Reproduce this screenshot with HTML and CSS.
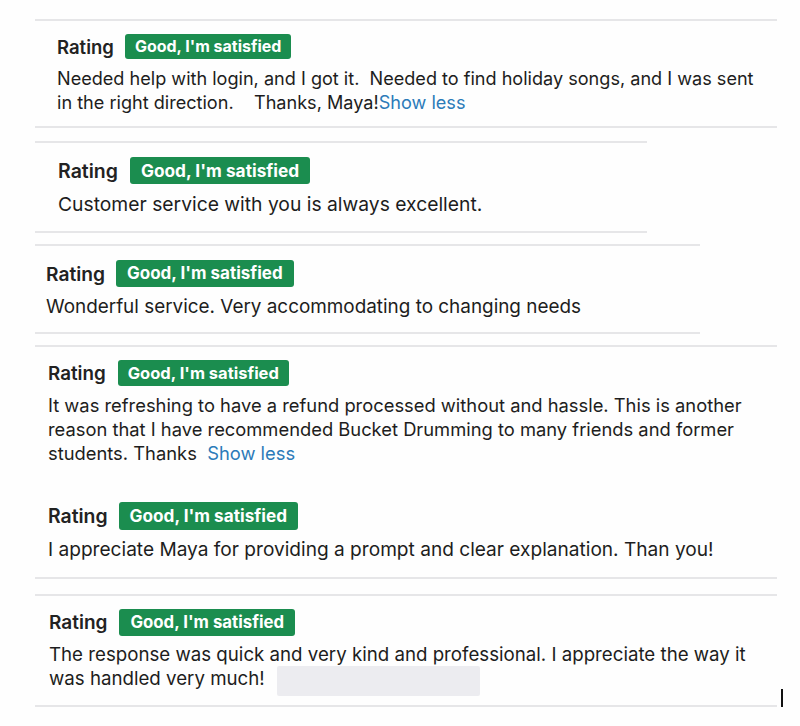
FILE: index.html
```html
<!DOCTYPE html>
<html>
<head>
<meta charset="utf-8">
<link rel="stylesheet" href="styles.css">
</head>
<body>
<main class="page">
  <section class="card card-a">
    <div class="head"><span class="label">Rating</span><span class="badge">Good, I'm satisfied</span></div>
    <p class="text">Needed help with login, and I got it.&nbsp; Needed to find holiday songs, and I was sent in the right direction.&nbsp;&nbsp;&nbsp; Thanks, Maya!<a class="more">Show less</a></p>
  </section>
  <section class="card card-b">
    <div class="head"><span class="label">Rating</span><span class="badge">Good, I'm satisfied</span></div>
    <p class="text">Customer service with you is always excellent.</p>
  </section>
  <section class="card card-c">
    <div class="head"><span class="label">Rating</span><span class="badge">Good, I'm satisfied</span></div>
    <p class="text">Wonderful service. Very accommodating to changing needs</p>
  </section>
  <section class="card card-d">
    <div class="head"><span class="label">Rating</span><span class="badge">Good, I'm satisfied</span></div>
    <p class="text">It was refreshing to have a refund processed without and hassle. This is another reason that I have recommended Bucket Drumming to many friends and former students. Thanks&nbsp; <a class="more">Show less</a></p>
    <div class="sub">
      <div class="head"><span class="label">Rating</span><span class="badge">Good, I'm satisfied</span></div>
      <p class="text">I appreciate Maya for providing a prompt and clear explanation. Than you!</p>
    </div>
  </section>
  <section class="card card-f">
    <div class="head"><span class="label">Rating</span><span class="badge">Good, I'm satisfied</span></div>
    <p class="text">The response was quick and very kind and professional. I appreciate the way it was handled very much!<span class="blank"></span></p>
    <span class="cursor"></span>
  </section>
</main>
</body>
</html>
```

FILE: styles.css
```css
html, body {
  margin: 0;
  padding: 0;
  background: #fefefe;
}
body {
  font-family: Inter, "Liberation Sans", sans-serif;
  color: #1d1d20;
}
.page {
  padding-top: 19px;
  padding-left: 35px;
  display: flex;
  flex-direction: column;
}
.card {
  border-top: 2px solid #e6e6e8;
  border-bottom: 2px solid #e6e6e8;
  box-sizing: border-box;
  position: relative;
}
.head {
  display: flex;
  align-items: center;
  gap: 11px;
  height: 25px;
}
.label {
  font-size: 18.5px;
  font-weight: 600;
  color: #222;
}
.badge {
  background: #1b8d4f;
  color: #fff;
  font-weight: 700;
  font-size: 16px;
  height: 25px;
  line-height: 25px;
  padding: 0 10px;
  border-radius: 3px;
}
.text {
  margin: 7px 0 0;
  font-size: 18.1px;
  line-height: 24px;
}
.more {
  color: #2c7bb9;
}
.card-a {
  width: 742px;
  padding: 13px 20px 12px 22px;
}
.card-b {
  width: 612px;
  margin-top: 13px;
  padding: 14px 20px 15px 23px;
}
.card-b .head { height: 27px; gap: 12px; }
.card-b .badge { height: 27px; line-height: 27px; font-size: 17.3px; padding: 0 11px; }
.card-b .label { font-size: 19.5px; }
.card-b .text { font-size: 19.3px; margin-top: 8px; }
.card-c {
  width: 665px;
  margin-top: 11px;
  padding: 14px 20px 13px 11px;
}
.card-c .head { height: 27px; gap: 11px; }
.card-c .badge { height: 27px; line-height: 27px; font-size: 17px; padding: 0 11px; }
.card-c .label { font-size: 19.2px; }
.card-c .text { font-size: 18.9px; margin-top: 8px; }
.card-d {
  width: 742px;
  margin-top: 11px;
  padding: 13px 20px 16px 13px;
}
.card-d > .head { height: 26px; gap: 12px; }
.card-d > .head .badge { height: 26px; line-height: 26px; font-size: 16.5px; }
.card-d > .head .label { font-size: 18.8px; }
.card-d > .text { font-size: 18.35px; }
.sub {
  margin-top: 37px;
}
.sub .head { height: 28px; gap: 11px; }
.sub .badge { height: 28px; line-height: 28px; font-size: 17.2px; padding: 0 11px; }
.sub .label { font-size: 19.4px; }
.sub .text { font-size: 19.1px; }
.card-f {
  width: 742px;
  margin-top: 15px;
  padding: 13px 20px 14px 14px;
}
.card-f .head { height: 27px; gap: 12px; }
.card-f .badge { height: 27px; line-height: 27px; font-size: 16.8px; padding: 0 11px; }
.card-f .label { font-size: 19px; }
.card-f .text { font-size: 18.7px; }
.blank {
  display: inline-block;
  width: 203px;
  height: 30px;
  margin: -1px 0 -7px 12px;
  background: #ececf0;
  vertical-align: top;
  border-radius: 2px;
}
.cursor {
  position: absolute;
  right: -6px;
  bottom: -2px;
  width: 2px;
  height: 18px;
  background: #111;
}
```
